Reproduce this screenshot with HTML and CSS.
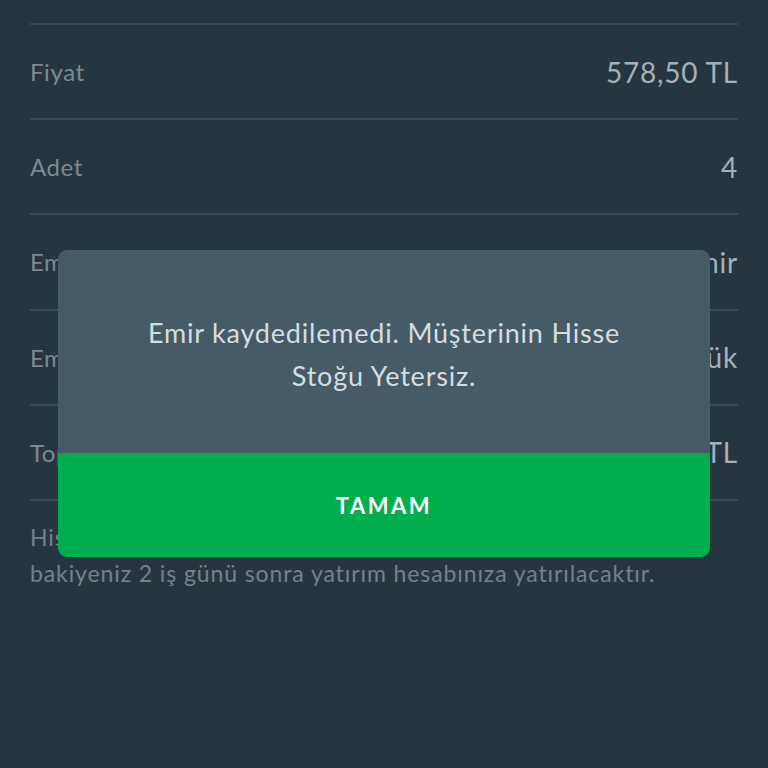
FILE: index.html
```html
<!DOCTYPE html>
<html lang="tr">
<head>
<meta charset="utf-8">
<link rel="stylesheet" href="styles.css">
</head>
<body>
<div class="screen">
  <div class="list">
    <div class="row"><span class="label">Fiyat</span><span class="value">578,50 TL</span></div>
    <div class="row"><span class="label">Adet</span><span class="value">4</span></div>
    <div class="row"><span class="label">Emir Tipi</span><span class="value">Limit Emir</span></div>
    <div class="row"><span class="label">Emir Süresi</span><span class="value">Günlük</span></div>
    <div class="row"><span class="label">Toplam</span><span class="value">2.314,00 TL</span></div>
    <div class="note">Hisse satışından elde edeceğiniz<br>bakiyeniz 2 iş günü sonra yatırım hesabınıza yatırılacaktır.</div>
  </div>
  <div class="modal">
    <div class="modal-body">Emir kaydedilemedi. Müşterinin Hisse Stoğu Yetersiz.</div>
    <div class="modal-btn">TAMAM</div>
  </div>
</div>
</body>
</html>
```
FILE: styles.css
```css
html, body {
  margin: 0;
  padding: 0;
}
body {
  background: #263640;
  font-family: Lato, "Open Sans", sans-serif;
  width: 768px;
  height: 768px;
  overflow: hidden;
}
.screen {
  position: relative;
  width: 768px;
  height: 768px;
}
.list {
  padding: 23px 30px 0 30px;
}
.row {
  height: 93.2px;
  border-top: 2px solid #3b4b55;
  display: flex;
  align-items: center;
  justify-content: space-between;
}
.label {
  font-size: 24px;
  letter-spacing: 0.6px;
  color: #7c8a93;
}
.value {
  font-size: 28px;
  letter-spacing: 0.8px;
  color: #a5b1b8;
}
.note {
  border-top: 2px solid #3b4b55;
  padding-top: 18px;
  font-size: 23px;
  letter-spacing: 0.9px;
  line-height: 36px;
  color: #74818a;
}
.modal {
  position: absolute;
  left: 58px;
  top: 250px;
  width: 652px;
  height: 307px;
  border-radius: 9px;
  overflow: hidden;
  display: flex;
  flex-direction: column;
}
.modal-body {
  height: 203px;
  background: #475b66;
  color: #d5dde1;
  font-size: 27px;
  letter-spacing: 0.8px;
  line-height: 43px;
  text-align: center;
  padding: 61px 70px 0 70px;
  box-sizing: border-box;
}
.modal-btn {
  flex: 1;
  background: #00ae4d;
  color: #ffffff;
  font-weight: bold;
  font-size: 22px;
  letter-spacing: 2.5px;
  display: flex;
  align-items: center;
  justify-content: center;
}
```
